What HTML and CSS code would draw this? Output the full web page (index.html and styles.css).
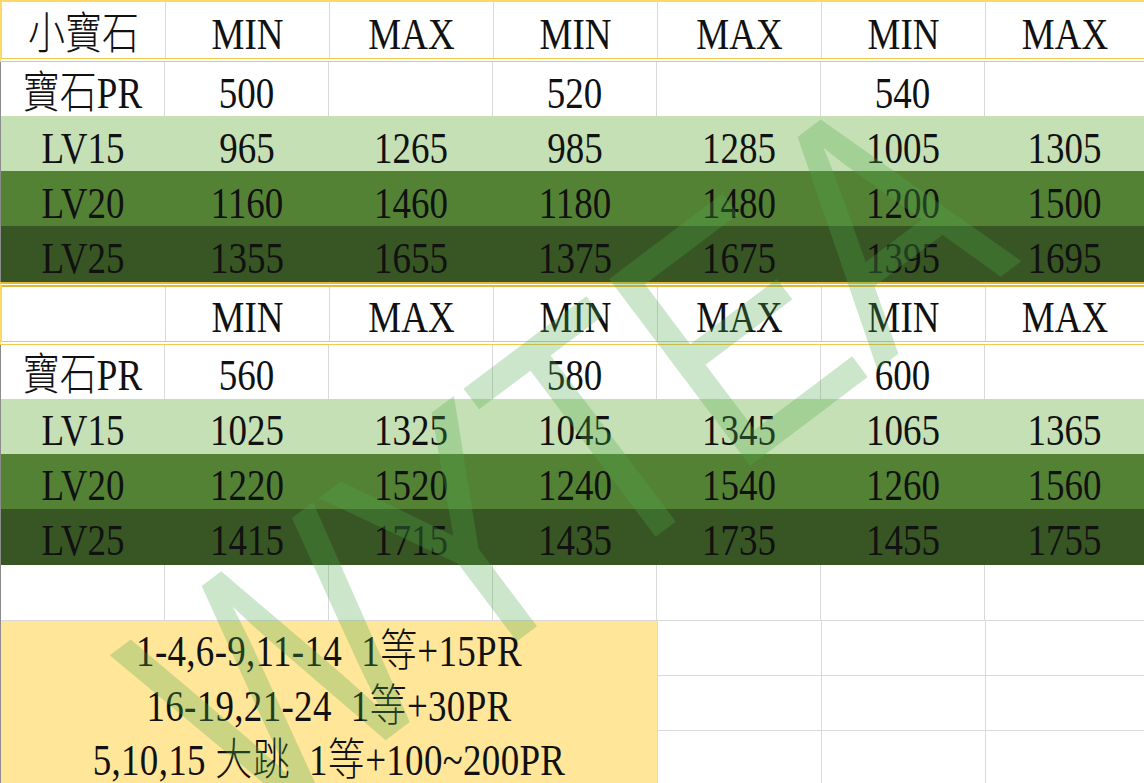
FILE: index.html
```html
<!DOCTYPE html>
<html lang="zh-Hant">
<head>
<meta charset="utf-8">
<title>小寶石</title>
<link rel="stylesheet" href="styles.css">
</head>
<body>
<div class="sheet">
  <div class="row hdr hdr1">
    <div class="c"><span class="t">小寶石</span></div>
    <div class="c"><span class="t">MIN</span></div>
    <div class="c"><span class="t">MAX</span></div>
    <div class="c"><span class="t">MIN</span></div>
    <div class="c"><span class="t">MAX</span></div>
    <div class="c"><span class="t">MIN</span></div>
    <div class="c"><span class="t">MAX</span></div>
  </div>
  <div class="row pr">
    <div class="c"><span class="t">寶石PR</span></div>
    <div class="c"><span class="t">500</span></div>
    <div class="c"></div>
    <div class="c"><span class="t">520</span></div>
    <div class="c"></div>
    <div class="c"><span class="t">540</span></div>
    <div class="c"></div>
  </div>
  <div class="row lv15">
    <div class="c"><span class="t">LV15</span></div>
    <div class="c"><span class="t">965</span></div>
    <div class="c"><span class="t">1265</span></div>
    <div class="c"><span class="t">985</span></div>
    <div class="c"><span class="t">1285</span></div>
    <div class="c"><span class="t">1005</span></div>
    <div class="c"><span class="t">1305</span></div>
  </div>
  <div class="row lv20">
    <div class="c"><span class="t">LV20</span></div>
    <div class="c"><span class="t">1160</span></div>
    <div class="c"><span class="t">1460</span></div>
    <div class="c"><span class="t">1180</span></div>
    <div class="c"><span class="t">1480</span></div>
    <div class="c"><span class="t">1200</span></div>
    <div class="c"><span class="t">1500</span></div>
  </div>
  <div class="row lv25">
    <div class="c"><span class="t">LV25</span></div>
    <div class="c"><span class="t">1355</span></div>
    <div class="c"><span class="t">1655</span></div>
    <div class="c"><span class="t">1375</span></div>
    <div class="c"><span class="t">1675</span></div>
    <div class="c"><span class="t">1395</span></div>
    <div class="c"><span class="t">1695</span></div>
  </div>
  <div class="row hdr hdr2">
    <div class="c"></div>
    <div class="c"><span class="t">MIN</span></div>
    <div class="c"><span class="t">MAX</span></div>
    <div class="c"><span class="t">MIN</span></div>
    <div class="c"><span class="t">MAX</span></div>
    <div class="c"><span class="t">MIN</span></div>
    <div class="c"><span class="t">MAX</span></div>
  </div>
  <div class="row pr">
    <div class="c"><span class="t">寶石PR</span></div>
    <div class="c"><span class="t">560</span></div>
    <div class="c"></div>
    <div class="c"><span class="t">580</span></div>
    <div class="c"></div>
    <div class="c"><span class="t">600</span></div>
    <div class="c"></div>
  </div>
  <div class="row lv15">
    <div class="c"><span class="t">LV15</span></div>
    <div class="c"><span class="t">1025</span></div>
    <div class="c"><span class="t">1325</span></div>
    <div class="c"><span class="t">1045</span></div>
    <div class="c"><span class="t">1345</span></div>
    <div class="c"><span class="t">1065</span></div>
    <div class="c"><span class="t">1365</span></div>
  </div>
  <div class="row lv20">
    <div class="c"><span class="t">LV20</span></div>
    <div class="c"><span class="t">1220</span></div>
    <div class="c"><span class="t">1520</span></div>
    <div class="c"><span class="t">1240</span></div>
    <div class="c"><span class="t">1540</span></div>
    <div class="c"><span class="t">1260</span></div>
    <div class="c"><span class="t">1560</span></div>
  </div>
  <div class="row lv25">
    <div class="c"><span class="t">LV25</span></div>
    <div class="c"><span class="t">1415</span></div>
    <div class="c"><span class="t">1715</span></div>
    <div class="c"><span class="t">1435</span></div>
    <div class="c"><span class="t">1735</span></div>
    <div class="c"><span class="t">1455</span></div>
    <div class="c"><span class="t">1755</span></div>
  </div>
  <div class="row empty">
    <div class="c"></div>
    <div class="c"></div>
    <div class="c"></div>
    <div class="c"></div>
    <div class="c"></div>
    <div class="c"></div>
    <div class="c"></div>
  </div>
  <div class="bottom">
    <div class="note">
      <div class="line"><span class="t">1-4,6-9,11-14  1等+15PR</span></div>
      <div class="line"><span class="t">16-19,21-24  1等+30PR</span></div>
      <div class="line"><span class="t">5,10,15 大跳  1等+100~200PR</span></div>
    </div>
    <div class="g"></div><div class="g"></div><div class="g"></div>
    <div class="g"></div><div class="g"></div><div class="g"></div>
    <div class="g"></div><div class="g"></div><div class="g"></div>
  </div>
  <div class="wm">WYTEA</div>
</div>
</body>
</html>
```
FILE: styles.css
```css
html, body {
  margin: 0;
  padding: 0;
  background: #ffffff;
}
body {
  width: 1144px;
  height: 783px;
  overflow: hidden;
  font-family: "Liberation Serif", "Noto Sans CJK TC", serif;
  font-weight: 300;
  color: #111111;
}
.sheet {
  position: relative;
  width: 1144px;
  height: 783px;
  overflow: hidden;
}
.row {
  display: grid;
  grid-template-columns: repeat(6, 164px) 1fr;
  box-sizing: border-box;
  height: 55px;
  border-left: 1px solid #8c8c8c;
}
.c {
  box-sizing: border-box;
  border-right: 1px solid #d9d9d9;
  display: flex;
  align-items: center;
  justify-content: center;
  padding-top: 7px;
  overflow: visible;
  white-space: nowrap;
}
.c:last-child {
  border-right: none;
}
.t {
  display: inline-block;
  font-size: 37px;
  line-height: 1;
  transform: scaleY(1.2);
  white-space: pre;
}
.hdr {
  border-left: 2px solid #ffd966;
  background: #ffffff;
}
.hdr1 {
  height: 62px;
  border-top: 2px solid #ffd966;
  border-bottom: 4px double #f4c84a;
}
.hdr2 {
  height: 63px;
  border-top: 5px double #e3b833;
  border-bottom: 4px double #f4c84a;
}
.pr {
  height: 54px;
}
.pr + .lv15 {
  height: 55px;
}
.lv15 {
  background: #c5e0b4;
}
.lv20 {
  background: #548235;
}
.lv25 {
  background: #375623;
  height: 56px;
}
.lv15 .c,
.lv20 .c,
.lv25 .c {
  border-right: none;
}
.empty {
  height: 55px;
}
.bottom {
  display: grid;
  grid-template-columns: 656px 164px 164px 1fr;
  grid-template-rows: repeat(3, 55px);
  border-left: 1px solid #8c8c8c;
}
.note {
  grid-row: 1 / span 3;
  grid-column: 1;
  background: #ffe699;
  border-top: 1px solid #d9d9d9;
  display: flex;
  flex-direction: column;
}
.line {
  height: 55px;
  display: flex;
  align-items: center;
  justify-content: center;
  padding-top: 6px;
  box-sizing: border-box;
}
.line .t {
  letter-spacing: 0.3px;
}
.g {
  box-sizing: border-box;
  border-top: 1px solid #d9d9d9;
  border-left: 1px solid #d9d9d9;
}
.wm {
  position: absolute;
  left: 565px;
  top: 458px;
  transform: translate(-50%, -50%) rotate(-37deg) scaleY(1.25);
  font-family: "Liberation Sans", sans-serif;
  font-weight: 400;
  font-size: 272px;
  line-height: 1;
  color: rgba(76, 168, 76, 0.29);
  white-space: nowrap;
  pointer-events: none;
}
```
